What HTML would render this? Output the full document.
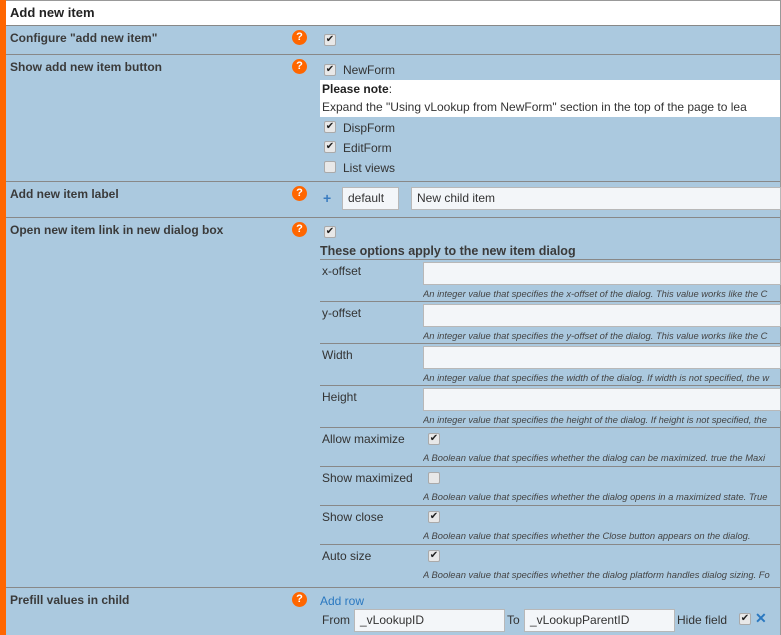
<!DOCTYPE html>
<html><head><meta charset="utf-8"><style>
*{margin:0;padding:0;box-sizing:border-box}
body{width:781px;height:635px;overflow:hidden;background:#abc9df;font-family:"Liberation Sans",sans-serif;color:#333;position:relative}
.a{position:absolute;white-space:nowrap}
.hl{position:absolute;height:1px;background:#888}
.b{font-weight:bold;font-size:12px;color:#3a3a3a}
.t{font-size:12px;color:#333}
.q{position:absolute;width:15px;height:15px;border-radius:50%;background:#f60;color:#fff;font-weight:bold;font-size:11px;text-align:center;line-height:15px}
.cb{position:absolute;width:12px;height:12px;border:1px solid #aaa;border-radius:2px;background:#e8e8e8;font-size:10px;line-height:10px;text-align:center;color:#222}
.in{position:absolute;height:23px;background:#f3f6f9;border:1px solid #b8b8b8;font-size:12px;padding-left:5px;line-height:21px;color:#333}
.d{position:absolute;font-style:italic;font-size:9.4px;color:#444;white-space:nowrap;overflow:hidden;width:358px}
</style></head><body>
<div class="a" style="left:0;top:0;width:6px;height:635px;background:#f60"></div>
<div class="a" style="left:6px;top:0;width:775px;height:1px;background:#999"></div>
<div class="a" style="left:6px;top:1px;width:774px;height:24px;background:#fff"></div>
<div class="a" style="left:780px;top:0;width:1px;height:635px;background:#999"></div>
<div class="a b" style="left:10px;top:5px;font-size:13px;color:#222">Add new item</div>
<div class="hl" style="left:6px;top:25px;width:774px"></div>

<div class="a b" style="left:10px;top:31px">Configure "add new item"</div>
<div class="q" style="left:292px;top:30px">?</div>
<div class="cb" style="left:324px;top:34px">✔</div>
<div class="hl" style="left:6px;top:54px;width:774px"></div>

<div class="a b" style="left:10px;top:60px">Show add new item button</div>
<div class="q" style="left:292px;top:59px">?</div>
<div class="cb" style="left:324px;top:64px">✔</div><div class="a t" style="left:343px;top:63px">NewForm</div>
<div class="a" style="left:320px;top:80px;width:460px;height:37px;background:#fff"></div>
<div class="a t" style="left:322px;top:82px"><b style="color:#222">Please note</b>:</div>
<div class="a t" style="left:322px;top:100px">Expand the "Using vLookup from NewForm" section in the top of the page to lea</div>
<div class="cb" style="left:324px;top:121px">✔</div><div class="a t" style="left:343px;top:121px">DispForm</div>
<div class="cb" style="left:324px;top:141px">✔</div><div class="a t" style="left:343px;top:141px">EditForm</div>
<div class="cb" style="left:324px;top:161px"></div><div class="a t" style="left:343px;top:161px">List views</div>
<div class="hl" style="left:6px;top:181px;width:774px"></div>

<div class="a b" style="left:10px;top:187px">Add new item label</div>
<div class="q" style="left:292px;top:186px">?</div>
<div class="a" style="left:323px;top:190px;color:#3a7cc0;font-weight:bold;font-size:14px">+</div>
<div class="in" style="left:342px;top:187px;width:57px">default</div>
<div class="in" style="left:411px;top:187px;width:370px">New child item</div>
<div class="hl" style="left:6px;top:217px;width:774px"></div>

<div class="a b" style="left:10px;top:223px">Open new item link in new dialog box</div>
<div class="q" style="left:292px;top:222px">?</div>
<div class="cb" style="left:324px;top:226px">✔</div>
<div class="a b" style="left:320px;top:244px;font-size:12.5px">These options apply to the new item dialog</div>
<div class="hl" style="left:320px;top:259px;width:460px"></div>

<div class="a t" style="left:322px;top:264px">x-offset</div>
<div class="in" style="left:423px;top:262px;width:358px"></div>
<div class="d" style="left:423px;top:288px">An integer value that specifies the x-offset of the dialog. This value works like the C</div>
<div class="hl" style="left:320px;top:301px;width:460px"></div>

<div class="a t" style="left:322px;top:306px">y-offset</div>
<div class="in" style="left:423px;top:304px;width:358px"></div>
<div class="d" style="left:423px;top:330px">An integer value that specifies the y-offset of the dialog. This value works like the C</div>
<div class="hl" style="left:320px;top:343px;width:460px"></div>

<div class="a t" style="left:322px;top:348px">Width</div>
<div class="in" style="left:423px;top:346px;width:358px"></div>
<div class="d" style="left:423px;top:372px">An integer value that specifies the width of the dialog. If width is not specified, the w</div>
<div class="hl" style="left:320px;top:385px;width:460px"></div>

<div class="a t" style="left:322px;top:390px">Height</div>
<div class="in" style="left:423px;top:388px;width:358px"></div>
<div class="d" style="left:423px;top:414px">An integer value that specifies the height of the dialog. If height is not specified, the</div>
<div class="hl" style="left:320px;top:427px;width:460px"></div>

<div class="a t" style="left:322px;top:432px">Allow maximize</div>
<div class="cb" style="left:428px;top:433px">✔</div>
<div class="d" style="left:423px;top:452px">A Boolean value that specifies whether the dialog can be maximized. true the Maxi</div>
<div class="hl" style="left:320px;top:466px;width:460px"></div>

<div class="a t" style="left:322px;top:471px">Show maximized</div>
<div class="cb" style="left:428px;top:472px"></div>
<div class="d" style="left:423px;top:491px">A Boolean value that specifies whether the dialog opens in a maximized state. True</div>
<div class="hl" style="left:320px;top:505px;width:460px"></div>

<div class="a t" style="left:322px;top:510px">Show close</div>
<div class="cb" style="left:428px;top:511px">✔</div>
<div class="d" style="left:423px;top:530px">A Boolean value that specifies whether the Close button appears on the dialog.</div>
<div class="hl" style="left:320px;top:544px;width:460px"></div>

<div class="a t" style="left:322px;top:549px">Auto size</div>
<div class="cb" style="left:428px;top:550px">✔</div>
<div class="d" style="left:423px;top:569px">A Boolean value that specifies whether the dialog platform handles dialog sizing. Fo</div>
<div class="hl" style="left:6px;top:587px;width:774px"></div>

<div class="a b" style="left:10px;top:593px">Prefill values in child</div>
<div class="q" style="left:292px;top:592px">?</div>
<div class="a t" style="left:320px;top:594px;color:#2a78c0">Add row</div>
<div class="a t" style="left:322px;top:613px">From</div>
<div class="in" style="left:354px;top:609px;width:151px">_vLookupID</div>
<div class="a t" style="left:507px;top:613px">To</div>
<div class="in" style="left:524px;top:609px;width:151px">_vLookupParentID</div>
<div class="a t" style="left:677px;top:613px">Hide field</div>
<div class="cb" style="left:739px;top:613px">✔</div>
<div class="a" style="left:755px;top:610px;color:#2a78c0;font-weight:bold;font-size:14px">✕</div>
</body></html>
